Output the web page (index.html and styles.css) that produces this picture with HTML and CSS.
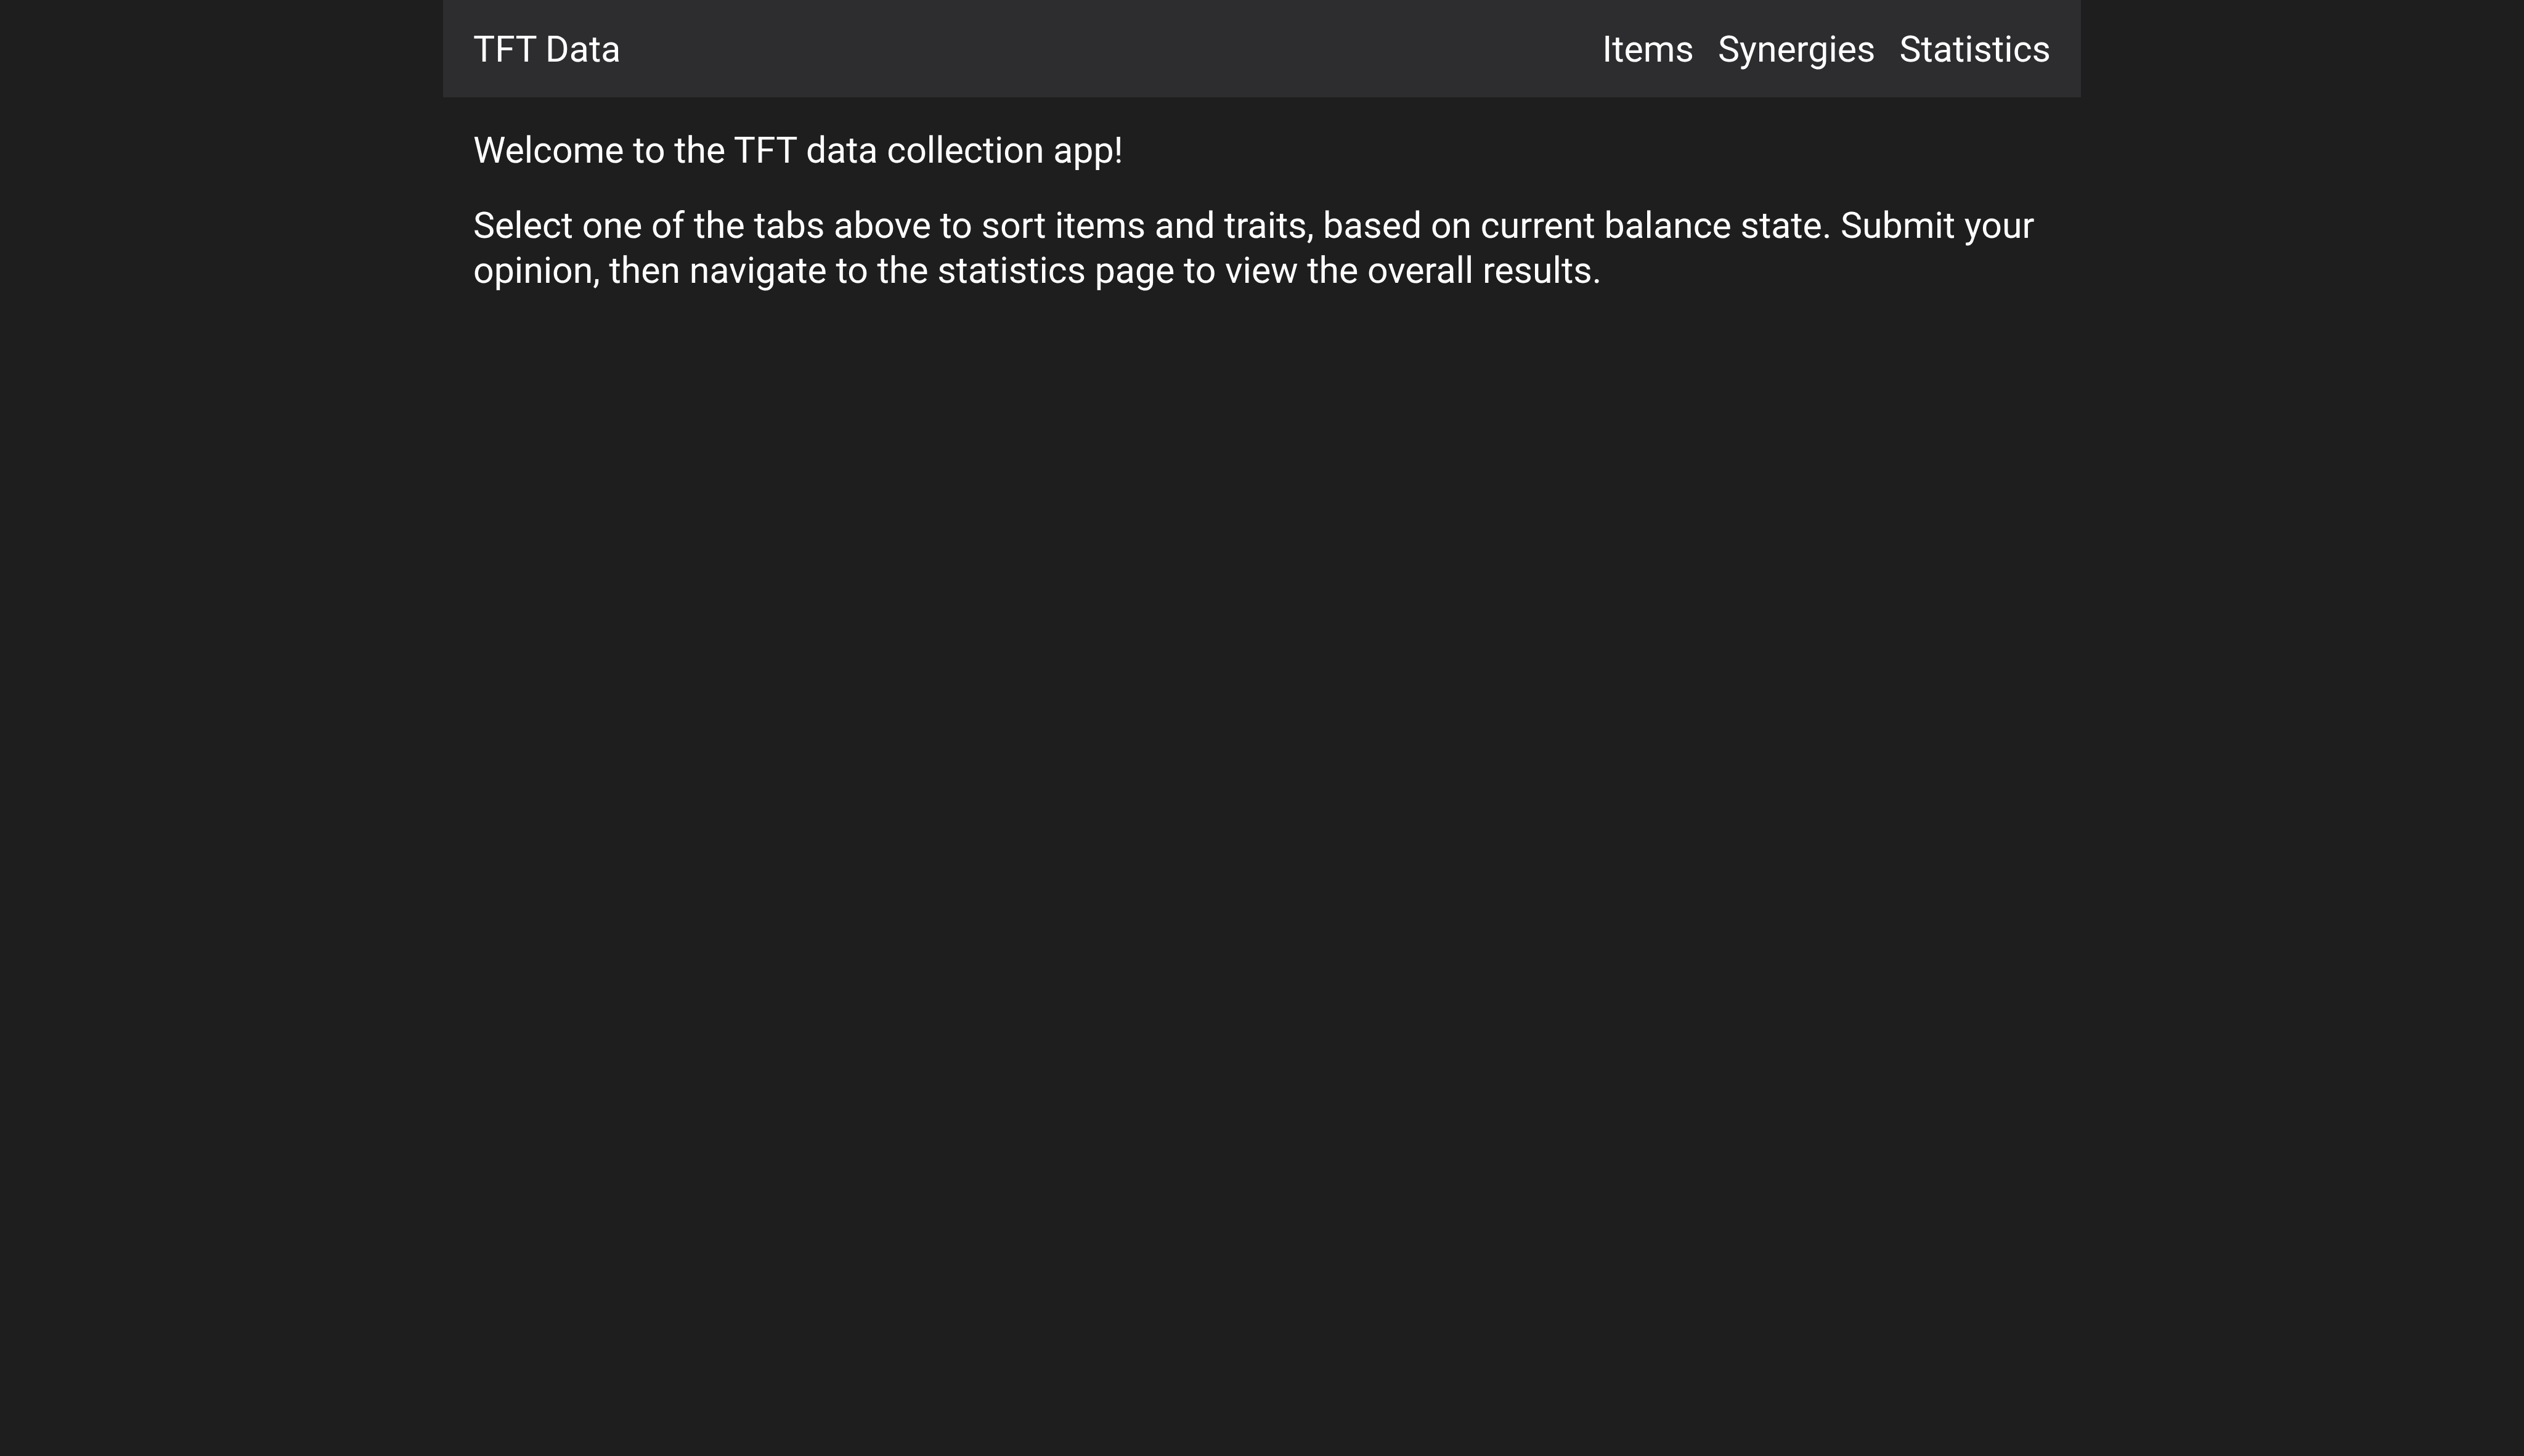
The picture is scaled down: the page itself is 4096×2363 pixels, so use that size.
FILE: index.html
```html
<!DOCTYPE html>
<html lang="en">
<head>
  <meta charset="utf-8">
  <meta name="viewport" content="width=device-width, initial-scale=1">
  <title>TFT Data</title>
  <link rel="stylesheet" href="styles.css">
</head>
<body>
  <div class="app">
    <header class="navbar">
      <a class="navbar-link" href="#">TFT Data</a>
      <nav class="navbar-tabs">
        <a class="navbar-link" href="#items">Items</a>
        <a class="navbar-link" href="#synergies">Synergies</a>
        <a class="navbar-link" href="#statistics">Statistics</a>
      </nav>
    </header>
    <main class="content">
      <p class="content-text">Welcome to the TFT data collection app!</p>
      <p class="content-text">Select one of the tabs above to sort items and traits, based on current balance state. Submit your opinion, then navigate to the statistics page to view the overall results.</p>
    </main>
  </div>
</body>
</html>
```
FILE: styles.css
```css
* {
  box-sizing: border-box;
}

body {
  margin: 0;
  min-height: 100vh;
  background: #1e1e1e;
  color: #ffffff;
  font-family: Roboto, "Liberation Sans", sans-serif;
  font-size: 59px;
  line-height: 73px;
}

.app {
  max-width: 2658px;
  margin: 0 auto;
}

.navbar {
  display: flex;
  flex-wrap: wrap;
  justify-content: space-between;
  padding: 43px 49px 42px;
  background: #2d2d30;
}

.navbar-tabs {
  display: flex;
  gap: 39px;
}

.navbar-link {
  color: inherit;
  text-decoration: none;
}

.content {
  display: flex;
  flex-direction: column;
  gap: 49px;
  padding: 49px;
}

.content-text {
  margin: 0;
}
```
